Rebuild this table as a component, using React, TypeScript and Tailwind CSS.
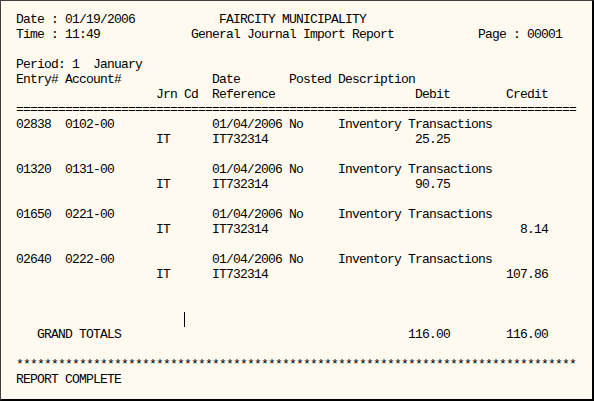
import React from "react";

type Part = [number, string];

function build(parts: Part[]): string {
  let s = "";
  for (const [col, text] of parts) {
    while (s.length < col) s += " ";
    s += text;
  }
  return s;
}

const entries = [
  { entry: "02838", acct: "0102-00", amt: "25.25", col: 57 },
  { entry: "01320", acct: "0131-00", amt: "90.75", col: 57 },
  { entry: "01650", acct: "0221-00", amt: "8.14", col: 72 },
  { entry: "02640", acct: "0222-00", amt: "107.86", col: 70 },
];

export default function App() {
  const lines: string[] = [];
  lines.push(build([[0, "Date : 01/19/2006"], [29, "FAIRCITY MUNICIPALITY"]]));
  lines.push(
    build([
      [0, "Time : 11:49"],
      [25, "General Journal Import Report"],
      [66, "Page : 00001"],
    ])
  );
  lines.push("");
  lines.push("Period: 1  January");
  lines.push(build([[0, "Entry# Account#"], [28, "Date"], [39, "Posted Description"]]));
  lines.push(build([[20, "Jrn Cd"], [28, "Reference"], [57, "Debit"], [70, "Credit"]]));
  lines.push("=".repeat(80));
  entries.forEach((e, i) => {
    lines.push(
      build([
        [0, e.entry],
        [7, e.acct],
        [28, "01/04/2006"],
        [39, "No"],
        [46, "Inventory Transactions"],
      ])
    );
    lines.push(build([[20, "IT"], [28, "IT732314"], [e.col, e.amt]]));
    if (i < entries.length - 1) lines.push("");
  });

  return (
    <div className="w-[594px] h-[401px] bg-[#fffaef] border-t border-l border-t-[#404040] border-l-[#404040] border-r-2 border-b-2 border-r-black border-b-black pl-[15px] pt-[11px] overflow-hidden">
      <div
        className="text-black whitespace-pre text-[13px] leading-[15px] tracking-[-0.8px]"
        style={{ fontFamily: '"Liberation Mono", "Courier New", monospace' }}
      >
        {lines.map((l, i) => (
          <div key={i} className="h-[15px]">
            {l}
          </div>
        ))}
        <div className="h-[15px]"></div>
        <div className="h-[15px]"></div>
        <div className="h-[15px] flex">
          <span>{" ".repeat(24)}</span>
          <span className="w-px h-[15px] bg-black"></span>
        </div>
        <div className="h-[15px]">
          {build([[3, "GRAND TOTALS"], [56, "116.00"], [70, "116.00"]])}
        </div>
        <div className="h-[15px]"></div>
        <div className="h-[15px]">{"*".repeat(80)}</div>
        <div className="h-[15px]">REPORT COMPLETE</div>
      </div>
    </div>
  );
}
